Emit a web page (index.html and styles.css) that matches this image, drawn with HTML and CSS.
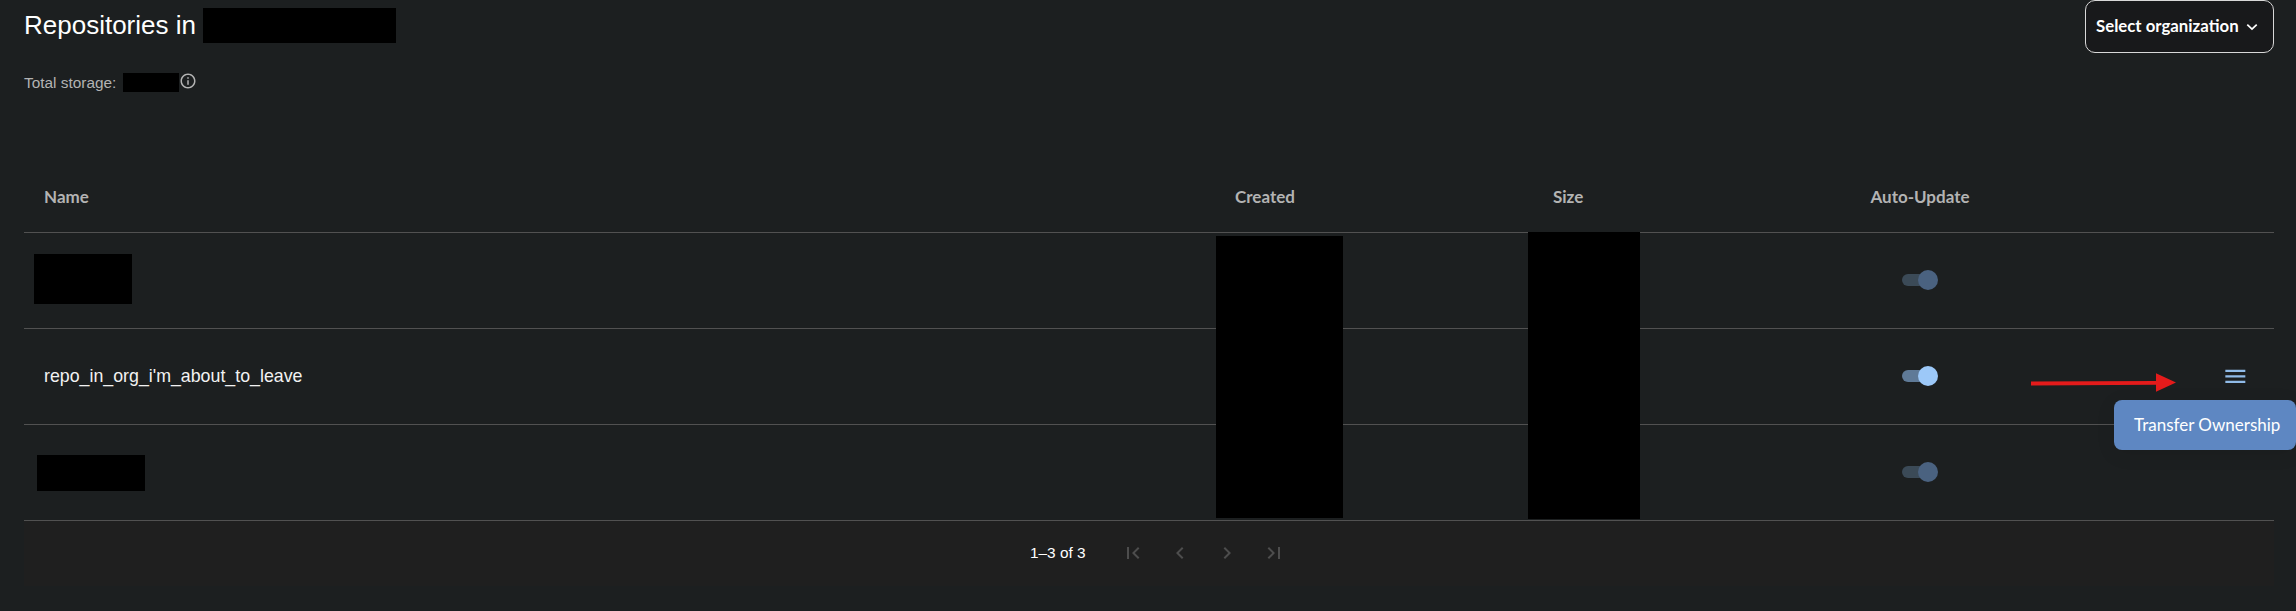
FILE: index.html
```html
<!DOCTYPE html>
<html lang="en">
<head>
  <meta charset="UTF-8" />
  <meta name="viewport" content="width=device-width, initial-scale=1.0" />
  <title>Repositories</title>
  <link rel="stylesheet" href="styles.css">
</head>
<body>

  <div class="top">
    <div class="heading">
      <h1>Repositories in <span class="redacted redacted-title"></span></h1>
      <p class="storage">
        Total storage: <span class="redacted redacted-storage"></span>
        <svg class="info-icon" viewBox="0 0 24 24"><path d="M11 7h2v2h-2zm0 4h2v6h-2zm1-9C6.48 2 2 6.48 2 12s4.48 10 10 10 10-4.48 10-10S17.52 2 12 2zm0 18c-4.41 0-8-3.59-8-8s3.59-8 8-8 8 3.59 8 8-3.59 8-8 8z"/></svg>
      </p>
    </div>
    <button class="org-select">
      Select organization
      <svg class="chevron" viewBox="0 0 14 8"><path d="M1.5 1.2 7 6.500l5.500-5.300"/></svg>
    </button>
  </div>

  <div class="table">
    <div class="row row-head">
      <div>Name</div>
      <div>Created</div>
      <div>Size</div>
      <div class="center">Auto-Update</div>
      <div></div>
    </div>

    <div class="row">
      <div><span class="redacted redacted-name-1"></span></div>
      <div></div>
      <div></div>
      <div class="center"><span class="toggle"></span></div>
      <div></div>
    </div>

    <div class="row">
      <div class="repo-name">repo_in_org_i'm_about_to_leave</div>
      <div></div>
      <div></div>
      <div class="center"><span class="toggle toggle-active"></span></div>
      <div class="actions">
        <svg class="menu-icon" viewBox="0 0 24 24"><path d="M3 18h18v-2H3zm0-5h18v-2H3zm0-7v2h18V6z"/></svg>
      </div>
    </div>

    <div class="row">
      <div><span class="redacted redacted-name-3"></span></div>
      <div></div>
      <div></div>
      <div class="center"><span class="toggle"></span></div>
      <div></div>
    </div>

    <div class="pagination">
      <span class="range">1–3 of 3</span>
      <div class="page-buttons">
        <svg viewBox="0 0 24 24"><path d="M18.41 16.59 13.82 12l4.59-4.59L17 6l-6 6 6 6zM6 6h2v12H6z"/></svg>
        <svg viewBox="0 0 24 24"><path d="M15.41 16.59 10.83 12l4.58-4.59L14 6l-6 6 6 6z"/></svg>
        <svg viewBox="0 0 24 24"><path d="M8.59 16.59 13.17 12 8.59 7.41 10 6l6 6-6 6z"/></svg>
        <svg viewBox="0 0 24 24"><path d="M5.59 7.41 10.18 12l-4.59 4.59L7 18l6-6-6-6zM16 6h2v12h-2z"/></svg>
      </div>
    </div>

    <!-- blacked out columns, they run across the rows -->
    <div class="redacted redacted-created"></div>
    <div class="redacted redacted-size"></div>

    <!-- red arrow drawn on the screenshot -->
    <svg class="annotation" viewBox="0 0 146 22"><path d="M0 9.500 125 9V1.300L145 10.500 125 19.700V12.800L0 13.500z"/></svg>

    <div class="tooltip">Transfer Ownership</div>
  </div>

</body>
</html>
```

FILE: styles.css
```css
body {
  font-family: "Liberation Sans", Arial, sans-serif;
  background-color: #1c1f20;
  color: #fff;
  margin: 0;
  padding: 0 22px 0 24px;
  overflow: hidden;
}

.top {
  display: flex;
  justify-content: space-between;
  align-items: flex-start;
  height: 160px;
}

.heading {
  padding-top: 8px;
}

h1 {
  display: flex;
  align-items: center;
  gap: 7px;
  margin: 0;
  font-size: 26px;
  font-weight: 400;
  line-height: 35px;
}

.storage {
  display: flex;
  align-items: center;
  gap: 7px;
  margin: 30px 0 0;
  font-size: 15.4px;
  line-height: 19px;
  color: #b3b3b3;
}

.info-icon {
  width: 18px;
  height: 18px;
  margin: -3px 0 0 -7px;
  fill: #b3b3b3;
}

.redacted {
  display: block;
  background-color: #000;
}

.redacted-title {
  width: 193px;
  height: 35px;
}

.redacted-storage {
  width: 56px;
  height: 19px;
}

.redacted-name-1 {
  width: 98px;
  height: 50px;
  margin: 0 0 4px -10px;
}

.redacted-name-3 {
  width: 108px;
  height: 36px;
  margin-left: -7px;
}

.redacted-created,
.redacted-size {
  position: absolute;
}

.redacted-created {
  left: 1192px;
  top: 76px;
  width: 127px;
  height: 282px;
}

.redacted-size {
  left: 1504px;
  top: 72px;
  width: 112px;
  height: 287px;
}

.org-select {
  display: flex;
  align-items: center;
  gap: 7px;
  width: 189px;
  height: 53px;
  padding: 0 10px 2px;
  background-color: #18191b;
  border: 1px solid #d8d8d8;
  border-radius: 10px;
  color: #fff;
  font-family: Lato, sans-serif;
  font-size: 16.800px;
  font-weight: 700;
  white-space: nowrap;
}

.chevron {
  width: 12px;
  height: 8px;
  margin-top: 2px;
  fill: none;
  stroke: #fff;
  stroke-width: 2;
}

.table {
  position: relative;
}

.row {
  display: grid;
  grid-template-columns: 1191px 318px 317px 140px 1fr;
  align-items: center;
  box-sizing: border-box;
  height: 96px;
  border-bottom: 1px solid #515151;
}

.row > div:not(.center):not(.actions) {
  padding-left: 20px;
}

.row-head {
  height: 73px;
  font-family: Lato, sans-serif;
  font-size: 17px;
  font-weight: 700;
  color: #b3b3b3;
}

.center {
  text-align: center;
}

.repo-name {
  font-size: 17.800px;
  color: #f2f2f2;
}

.toggle {
  display: inline-block;
  position: relative;
  left: -1px;
  width: 34px;
  height: 12px;
  margin-top: 2px;
  border-radius: 6px;
  background-color: #3b4a57;
}

.toggle::after {
  content: "";
  position: absolute;
  right: -2px;
  top: -4px;
  width: 20px;
  height: 20px;
  border-radius: 50%;
  background-color: #4a6280;
}

.toggle-active {
  background-color: #5f7a97;
}

.toggle-active::after {
  background-color: #9cc8f8;
}

.actions {
  display: flex;
  justify-content: flex-end;
  padding-right: 25.700px;
  margin-bottom: 1px;
}

.menu-icon {
  width: 26.670px;
  height: 26.670px;
  fill: #90bbe8;
}

.pagination {
  display: flex;
  align-items: center;
  gap: 35px;
  height: 65px;
  padding: 0 0 2px 1006px;
  box-sizing: border-box;
  background-color: #1f1f1f;
}

.range {
  font-size: 15.400px;
}

.page-buttons {
  display: flex;
  gap: 23px;
}

.page-buttons svg {
  width: 24px;
  height: 24px;
  fill: #4d4d4d;
}

.annotation {
  position: absolute;
  left: 2007px;
  top: 212px;
  width: 146px;
  height: 22px;
  fill: #e41b1b;
}

.tooltip {
  position: absolute;
  left: 2090px;
  top: 240px;
  width: 182px;
  height: 50px;
  box-sizing: border-box;
  padding-left: 20px;
  border-radius: 8px;
  background-color: #5e87c2;
  box-shadow: 0 4px 20px rgba(0, 0, 0, 0.08);
  font-family: Lato, sans-serif;
  font-size: 17px;
  line-height: 50px;
  color: #fff;
  white-space: nowrap;
}
```
